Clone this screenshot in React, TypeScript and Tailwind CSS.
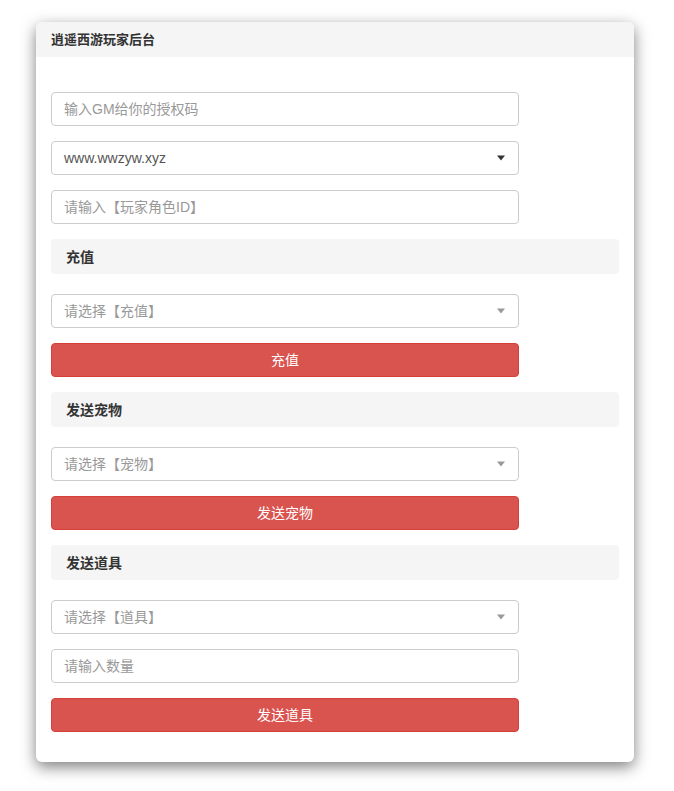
const font = "font-['Liberation_Sans','Noto_Sans_CJK_SC',sans-serif]";

function Caret({ dark }: { dark?: boolean }) {
  return (
    <span
      className={`absolute right-[13px] top-1/2 -translate-y-1/2 h-0 w-0 border-x-[4px] border-t-[5px] border-x-transparent ${
        dark ? "border-t-[#333]" : "border-t-[#999]"
      }`}
    />
  );
}

function Field({ placeholder, value, select, dark }: { placeholder?: string; value?: string; select?: boolean; dark?: boolean }) {
  return (
    <div className="relative h-[34px] w-[468px] rounded-[4px] border border-[#ccc] bg-white pl-[12px] flex items-center text-[14px] leading-none">
      {value ? <span className="text-[#555]">{value}</span> : <span className="text-[#999]">{placeholder}</span>}
      {select && <Caret dark={dark} />}
    </div>
  );
}

function Section({ title }: { title: string }) {
  return (
    <div className="h-[35px] rounded-[4px] bg-[#f5f5f5] px-[15px] flex items-center text-[14px] leading-none font-bold text-[#333]">
      {title}
    </div>
  );
}

function Btn({ label }: { label: string }) {
  return (
    <button className="h-[34px] w-[468px] rounded-[4px] border border-[#d43f3a] bg-[#d9534f] text-white text-[14px] leading-none">
      {label}
    </button>
  );
}

export default function App() {
  return (
    <div className={`min-h-[791px] bg-white pt-[22px] pl-[36px] ${font}`}>
      <div className="w-[598px] rounded-[6px] bg-white shadow-[0_5px_15px_rgba(0,0,0,0.5)] overflow-hidden">
        <div className="h-[35px] bg-[#f5f5f5] px-[15px] flex items-center text-[13px] leading-none font-bold text-[#333]">
          逍遥西游玩家后台
        </div>
        <div className="px-[15px] pt-[35px] pb-[30px] flex flex-col">
          <div className="flex flex-col gap-[15px]">
            <Field placeholder="输入GM给你的授权码" />
            <Field value="www.wwzyw.xyz" select dark />
            <Field placeholder="请输入【玩家角色ID】" />
            <Section title="充值" />
          </div>
          <div className="mt-[20px] flex flex-col gap-[15px]">
            <Field placeholder="请选择【充值】" select />
            <Btn label="充值" />
            <Section title="发送宠物" />
          </div>
          <div className="mt-[20px] flex flex-col gap-[15px]">
            <Field placeholder="请选择【宠物】" select />
            <Btn label="发送宠物" />
            <Section title="发送道具" />
          </div>
          <div className="mt-[20px] flex flex-col gap-[15px]">
            <Field placeholder="请选择【道具】" select />
            <Field placeholder="请输入数量" />
            <Btn label="发送道具" />
          </div>
        </div>
      </div>
    </div>
  );
}
